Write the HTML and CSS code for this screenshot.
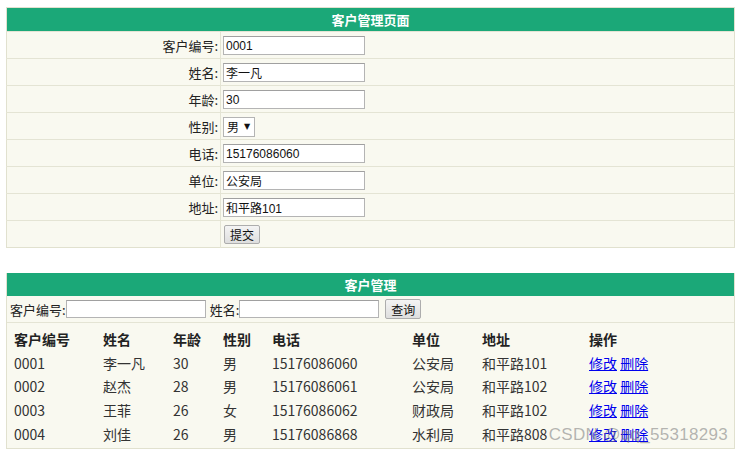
FILE: index.html
```html
<!DOCTYPE html>
<html lang="zh-CN">
<head>
<meta charset="utf-8">
<title>客户管理</title>
<link rel="stylesheet" href="styles.css">
</head>
<body>
<div class="page">
  <table class="form">
    <tr><th colspan="2" class="title">客户管理页面</th></tr>
    <tr><td class="lbl">客户编号:</td><td class="val"><input class="txt" value="0001"></td></tr>
    <tr><td class="lbl">姓名:</td><td class="val"><input class="txt" value="李一凡"></td></tr>
    <tr><td class="lbl">年龄:</td><td class="val"><input class="txt" value="30"></td></tr>
    <tr><td class="lbl">性别:</td><td class="val"><span class="select">男<span class="arrow">▼</span></span></td></tr>
    <tr><td class="lbl">电话:</td><td class="val"><input class="txt" value="15176086060"></td></tr>
    <tr><td class="lbl">单位:</td><td class="val"><input class="txt" value="公安局"></td></tr>
    <tr><td class="lbl">地址:</td><td class="val"><input class="txt" value="和平路101"></td></tr>
    <tr><td class="lbl"></td><td class="val"><button class="btn btn-submit">提交</button></td></tr>
  </table>

  <div class="list">
    <div class="title list-title">客户管理</div>
    <div class="search">
      <span>客户编号:</span><input class="stxt">
      <span class="sname">姓名:</span><input class="stxt">
      <button class="btn btn-query">查询</button>
    </div>
    <table class="data">
      <colgroup>
        <col class="c1"><col class="c2"><col class="c3"><col class="c4"><col class="c5"><col class="c6"><col class="c7"><col>
      </colgroup>
      <tr class="head"><td>客户编号</td><td>姓名</td><td>年龄</td><td>性别</td><td>电话</td><td>单位</td><td>地址</td><td>操作</td></tr>
      <tr><td>0001</td><td>李一凡</td><td>30</td><td>男</td><td>15176086060</td><td>公安局</td><td>和平路101</td><td><a href="#">修改</a> <a href="#">删除</a></td></tr>
      <tr><td>0002</td><td>赵杰</td><td>28</td><td>男</td><td>15176086061</td><td>公安局</td><td>和平路102</td><td><a href="#">修改</a> <a href="#">删除</a></td></tr>
      <tr><td>0003</td><td>王菲</td><td>26</td><td>女</td><td>15176086062</td><td>财政局</td><td>和平路102</td><td><a href="#">修改</a> <a href="#">删除</a></td></tr>
      <tr><td>0004</td><td>刘佳</td><td>26</td><td>男</td><td>15176086868</td><td>水利局</td><td>和平路808</td><td><a href="#">修改</a> <a href="#">删除</a></td></tr>
    </table>
    <div class="watermark">CSDN @qq_55318293</div>
  </div>
</div>
</body>
</html>
```

FILE: styles.css
```css
html, body {
  margin: 0;
  background: #ffffff;
}
body {
  font-family: "Noto Sans CJK SC", "Liberation Sans", sans-serif;
  font-size: 13px;
  color: #222;
}
.page {
  padding: 7px 0 0 6px;
  width: 729px;
}
.form {
  width: 729px;
  border-collapse: collapse;
  background: #f9f9f0;
  border: 1px solid #e1e1cf;
}
.title {
  background: #1ba878;
  color: #fff;
  font-weight: bold;
  font-size: 13px;
  text-align: center;
  height: 23px;
  padding: 0;
  line-height: 23px;
}
.form td {
  height: 26px;
  padding: 0;
  border-top: 1px solid #e4e4d4;
}
.form .lbl {
  width: 211px;
  text-align: right;
  padding-right: 2px;
  border-right: 1px solid #e4e4d4;
  font-size: 13px;
  color: #222;
}
.form .val {
  padding-left: 2px;
}
.txt {
  box-sizing: border-box;
  width: 142px;
  height: 19px;
  margin: 0;
  padding: 0 2px;
  border: 1px solid #b4b4b4;
  border-top-color: #a0a0a0;
  background: #fff;
  font-family: "Liberation Sans", "Noto Sans CJK SC", sans-serif;
  font-size: 12px;
  color: #111;
  vertical-align: middle;
}
.select {
  box-sizing: border-box;
  display: inline-flex;
  align-items: center;
  gap: 5px;
  height: 20px;
  width: 32px;
  padding: 0 3px;
  border: 1px solid #b4b4b4;
  background: #fff;
  font-size: 12px;
  color: #111;
  vertical-align: middle;
}
.arrow {
  font-size: 8px;
  font-family: "DejaVu Sans", sans-serif;
}
.btn {
  box-sizing: border-box;
  height: 19px;
  padding: 0 5px;
  margin: 0;
  border: 1px solid #adadad;
  border-radius: 2px;
  background: linear-gradient(#f4f4f4, #dedede);
  font-family: "Noto Sans CJK SC", sans-serif;
  font-size: 12px;
  line-height: 17px;
  color: #111;
  vertical-align: middle;
}
.btn-submit {
  margin-left: 1px;
}
.list {
  position: relative;
  margin-top: 25px;
  width: 729px;
  box-sizing: border-box;
  border: 1px solid #e1e1cf;
  border-top: 0;
  background: #f9f9f0;
}
.list-title {
  display: block;
}
.search {
  display: flex;
  align-items: center;
  height: 26px;
  padding-left: 3px;
  border-bottom: 1px solid #e4e4d4;
  font-size: 13px;
  color: #222;
}
.stxt {
  box-sizing: border-box;
  width: 140px;
  height: 18px;
  margin: 0;
  border: 1px solid #b4b4b4;
  border-top-color: #a0a0a0;
  background: #fff;
}
.sname {
  margin-left: 4px;
}
.btn-query {
  margin-left: 6px;
  height: 20px;
}
.data {
  border-collapse: collapse;
  margin: 4px 0 3px 3px;
  table-layout: fixed;
  width: 720px;
  font-size: 14px;
  color: #333;
}
.data td {
  padding: 0 0 0 4px;
  height: 23.7px;
  line-height: 20px;
  white-space: nowrap;
}
.data .head td {
  font-weight: bold;
  color: #222;
}
.c1 { width: 89px; }
.c2 { width: 70px; }
.c3 { width: 50px; }
.c4 { width: 49px; }
.c5 { width: 140px; }
.c6 { width: 70px; }
.c7 { width: 107px; }
.data a {
  color: #0000ee;
  text-decoration: underline;
}
.watermark {
  position: absolute;
  right: 6px;
  bottom: 3px;
  font-family: "Liberation Sans", sans-serif;
  font-size: 17px;
  color: rgba(120, 120, 120, 0.55);
  letter-spacing: 0.3px;
  pointer-events: none;
}
```
